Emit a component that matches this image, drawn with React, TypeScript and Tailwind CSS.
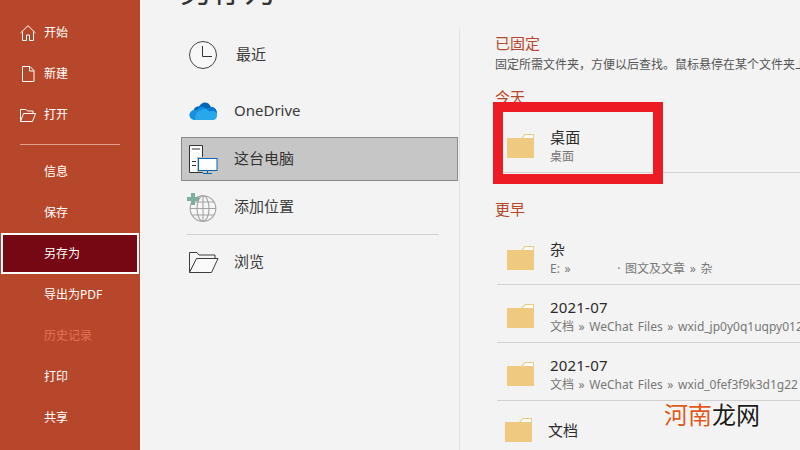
import React from "react";

const CJK = "font-['Noto_Sans','Noto_Sans_CJK_SC',sans-serif]";

function Folder() {
  return (
    <svg width="27" height="24" viewBox="0 0 27 24" className="shrink-0">
      <path d="M0 4H14L18 0H27V24H0Z" fill="#eec97f" />
      <path d="M15.500 4L18.500 1H26V4Z" fill="#ffffff" />
    </svg>
  );
}

function HomeIcon() {
  return (
    <svg width="16" height="16" viewBox="0 0 16 16" fill="none" stroke="#fff" strokeWidth="1" className="shrink-0">
      <path d="M.5 8L8 .7 15.5 8M2.5 6.5V15.5H6.5V10H9.5V15.5H13.5V6.5" />
    </svg>
  );
}
function DocIcon() {
  return (
    <svg width="16" height="16" viewBox="0 0 16 16" fill="none" stroke="#fff" strokeWidth="1" className="shrink-0">
      <path d="M2.5.5H10L14 4.5V15.5H2.5ZM9.5.5V5H14" />
    </svg>
  );
}
function OpenIcon() {
  return (
    <svg width="16" height="16" viewBox="0 0 16 16" fill="none" stroke="#fff" strokeWidth="1" className="shrink-0">
      <path d="M.5 14.5V2.5H6L7.5 4H13V6.5M.5 14.5H12.5L15.5 6.5H3.5Z" />
    </svg>
  );
}

function Clock() {
  return (
    <svg width="28" height="28" viewBox="0 0 28 28" fill="none" className="shrink-0">
      <circle cx="14" cy="14" r="13.5" stroke="#444" fill="#f8f8f8" />
      <path d="M13.5 5V15.5H23" stroke="#333" />
    </svg>
  );
}
function Cloud() {
  return (
    <svg width="28" height="20" viewBox="0 0 28 20" className="shrink-0">
      <path d="M4 11C5 6 8 5 10 5.500C12 1 19 -1 22 6C25 6 27.500 8 28 12L14 17Z" fill="#0364b8" />
      <path d="M10 5.500C12 4.500 15 5.500 17 7.500L22 6C25 6 27.500 8 28 12L17 15Z" fill="#0078d4" />
      <path d="M6 19C1 19 -1 14 1.500 11C3 9 6 8.500 8 9C10 6 14 5.500 17 7.500L24 16L15 19Z" fill="#1490df" />
      <path d="M6 19H24C27 19 29 15 27.800 12C26 10 23 9.500 20.500 10.500C19 9 17.500 8 17 7.500L8 11C6 15 6 17 6 19Z" fill="#28a8ea" />
    </svg>
  );
}
function PC() {
  return (
    <svg width="29" height="29" viewBox="0 0 29 29" fill="none" className="shrink-0">
      <path d="M.5.500H13.500V27.500H.5Z" fill="#fff" stroke="#333" />
      <path d="M3 4H11M3 16.500H7M3 20.500H7" stroke="#333" />
      <rect x="8" y="12" width="20" height="15" fill="#c4c4c4" />
      <rect x="9.500" y="13.500" width="18.500" height="12" fill="#fff" stroke="#0f66b0" />
      <path d="M18.500 26V28.500M14 28.500H23" stroke="#0f66b0" />
    </svg>
  );
}
function Globe() {
  return (
    <svg width="30" height="29" viewBox="0 0 30 29" fill="none" className="shrink-0">
      <g stroke="#a3a3a3" strokeWidth="1.100">
        <circle cx="16" cy="15.500" r="12.800" fill="#f6f6f6" />
        <ellipse cx="16" cy="15.500" rx="6" ry="12.800" />
        <path d="M3.200 15.500H28.800M5 9H27M5 22H27M16 2.700V28.300" />
      </g>
      <path d="M4 0H8V4H12V8H8V12H4V8H0V4H4Z" fill="#7fae9f" />
    </svg>
  );
}
function OpenBig() {
  return (
    <svg width="30" height="21" viewBox="0 0 30 21" fill="none" className="shrink-0">
      <path d="M.5 20.500V.500H8L10 3H26V6.500H8L.5 20.500" fill="#f6f6f6" stroke="#3c3c3c" />
      <path d="M.5 20.500H22.500L29 6.500H7.500Z" fill="#fafafa" stroke="#3c3c3c" />
    </svg>
  );
}

function NavItem({ label, icon, dim, active }: { label: string; icon?: React.ReactNode; dim?: boolean; active?: boolean }) {
  return (
    <div
      className={
        "flex h-[41px] items-center text-[12px] " +
        (active
          ? "mx-px border-2 border-white bg-[#750812] pl-[41px] text-white"
          : dim
            ? "pl-11 text-[#e2725b]"
            : "pl-5 text-white")
      }
    >
      {icon ? <span className="mr-2 flex w-4 items-center justify-center">{icon}</span> : null}
      <span className={!icon && !dim && !active ? "pl-6" : ""}>{label}</span>
    </div>
  );
}

function Place({ icon, label, w = "w-[45px]", extra = "" }: { icon: React.ReactNode; label: string; w?: string; extra?: string }) {
  return (
    <div className={"flex h-[48px] items-center pl-[49px] text-[15px] text-[#3a3a3a] " + extra}>
      <span className={"flex items-center " + w}>{icon}</span>
      <span className="pb-[2px]">{label}</span>
    </div>
  );
}

function Row({ title, sub, cls = "" }: { title: string; sub: React.ReactNode; cls?: string }) {
  return (
    <div className={"ml-[2px] flex h-[58px] items-center border-b border-[#d2d2d2] pt-[4px] pl-[10px] " + cls}>
      <Folder />
      <div className="ml-4 min-w-0 whitespace-nowrap">
        <div className="h-[21px] text-[15px] leading-[21px] tracking-[0.2px] text-[#2b2b2b]">{title}</div>
        <div className="h-[17px] text-[12px] leading-[17px] [word-spacing:1.5px] text-[#777]">{sub}</div>
      </div>
    </div>
  );
}

export default function App() {
  return (
    <div className={"relative flex h-[450px] w-[800px] overflow-hidden bg-[#f3f3f3] " + CJK}>
      <aside className="w-[140px] shrink-0 bg-[#b7472a] pt-3">
        <NavItem label="开始" icon={<HomeIcon />} />
        <NavItem label="新建" icon={<DocIcon />} />
        <NavItem label="打开" icon={<OpenIcon />} />
        <div className="mx-5 mt-[9px] mb-[6px] h-px bg-[#e0a08e]" />
        <NavItem label="信息" />
        <NavItem label="保存" />
        <NavItem label="另存为" active />
        <NavItem label="导出为PDF" />
        <NavItem label="历史记录" dim />
        <NavItem label="打印" />
        <NavItem label="共享" />
      </aside>

      <main className="flex min-w-0 flex-1 flex-col">
        <h1 className="ml-10 mt-[-26px] h-[32px] text-[32px] leading-[32px] font-normal text-[#333]">另存为</h1>
        <div className="mt-[-7px] flex min-h-0 flex-1 pt-[30px]">
          <section className="w-[320px] shrink-0 border-r border-[#e1e1e1]">
            <Place icon={<Clock />} label="最近" w="w-[47px]" extra="mt-[2px]" />
            <Place icon={<Cloud />} label="OneDrive" extra="mt-2" />
            <div className="ml-[41px] mr-px mt-[2px] flex h-[44px] items-center border border-[#8a8a8a] bg-[#c6c6c6] pl-[7px] text-[15px] text-[#333]">
              <span className="flex w-[45px] items-center"><PC /></span>
              <span className="pb-[2px]">这台电脑</span>
            </div>
            <div className="mt-[2px] flex h-[48px] items-center pl-[47px] text-[15px] text-[#3a3a3a]">
              <span className="flex w-[47px] items-center"><Globe /></span>
              <span className="pb-[2px]">添加位置</span>
            </div>
            <div className="ml-[47px] mr-5 mt-[3px] h-px bg-[#d2d2d2]" />
            <Place icon={<OpenBig />} label="浏览" extra="mt-[3px]" />
          </section>

          <section className="min-w-0 flex-1 overflow-hidden pl-[35px]">
            <div className="mt-[4px] h-5 text-[15px] leading-5 text-[#b7472a]">已固定</div>
            <div className="mt-[3px] h-[18px] whitespace-nowrap text-[12px] leading-[18px] text-[#555]">
              固定所需文件夹，方便以后查找。鼠标悬停在某个文件夹上
            </div>
            <div className="mt-[13px] h-5 text-[15px] leading-5 text-[#b7472a]">今天</div>
            <Row title="桌面" sub="桌面" cls="mt-[8px]" />
            <div className="mt-[26px] h-5 text-[15px] leading-5 text-[#b7472a]">更早</div>
            <Row
              title="杂"
              sub={<span>E: » <span className="ml-[42px]">· 图文及文章 » 杂</span></span>}
              cls="mt-[8px]"
            />
            <Row title="2021-07" sub="文档 » WeChat Files » wxid_jp0y0q1uqpy012" />
            <Row title="2021-07" sub="文档 » WeChat Files » wxid_0fef3f9k3d1g22" />
            <div className="flex h-[58px] items-center">
              <span className="ml-[10px]"><Folder /></span>
              <span className="ml-[16px] text-[15px] text-[#2b2b2b]">文档</span>
            </div>
          </section>
        </div>
      </main>

      {/* annotation drawn over the screenshot */}
      <div className="absolute left-[493px] top-[102px] h-[82px] w-[170px] border-[10px] border-[#ed1c24]" />
      {/* watermark */}
      <div className="absolute left-[664px] top-[399px] text-[24px] leading-[32px] [text-shadow:0_0_2px_#fff,0_0_2px_#fff]">
        <span className="text-[#e2581a]">河南</span>
        <span className="text-[#1a1a1a]">龙网</span>
      </div>
    </div>
  );
}
